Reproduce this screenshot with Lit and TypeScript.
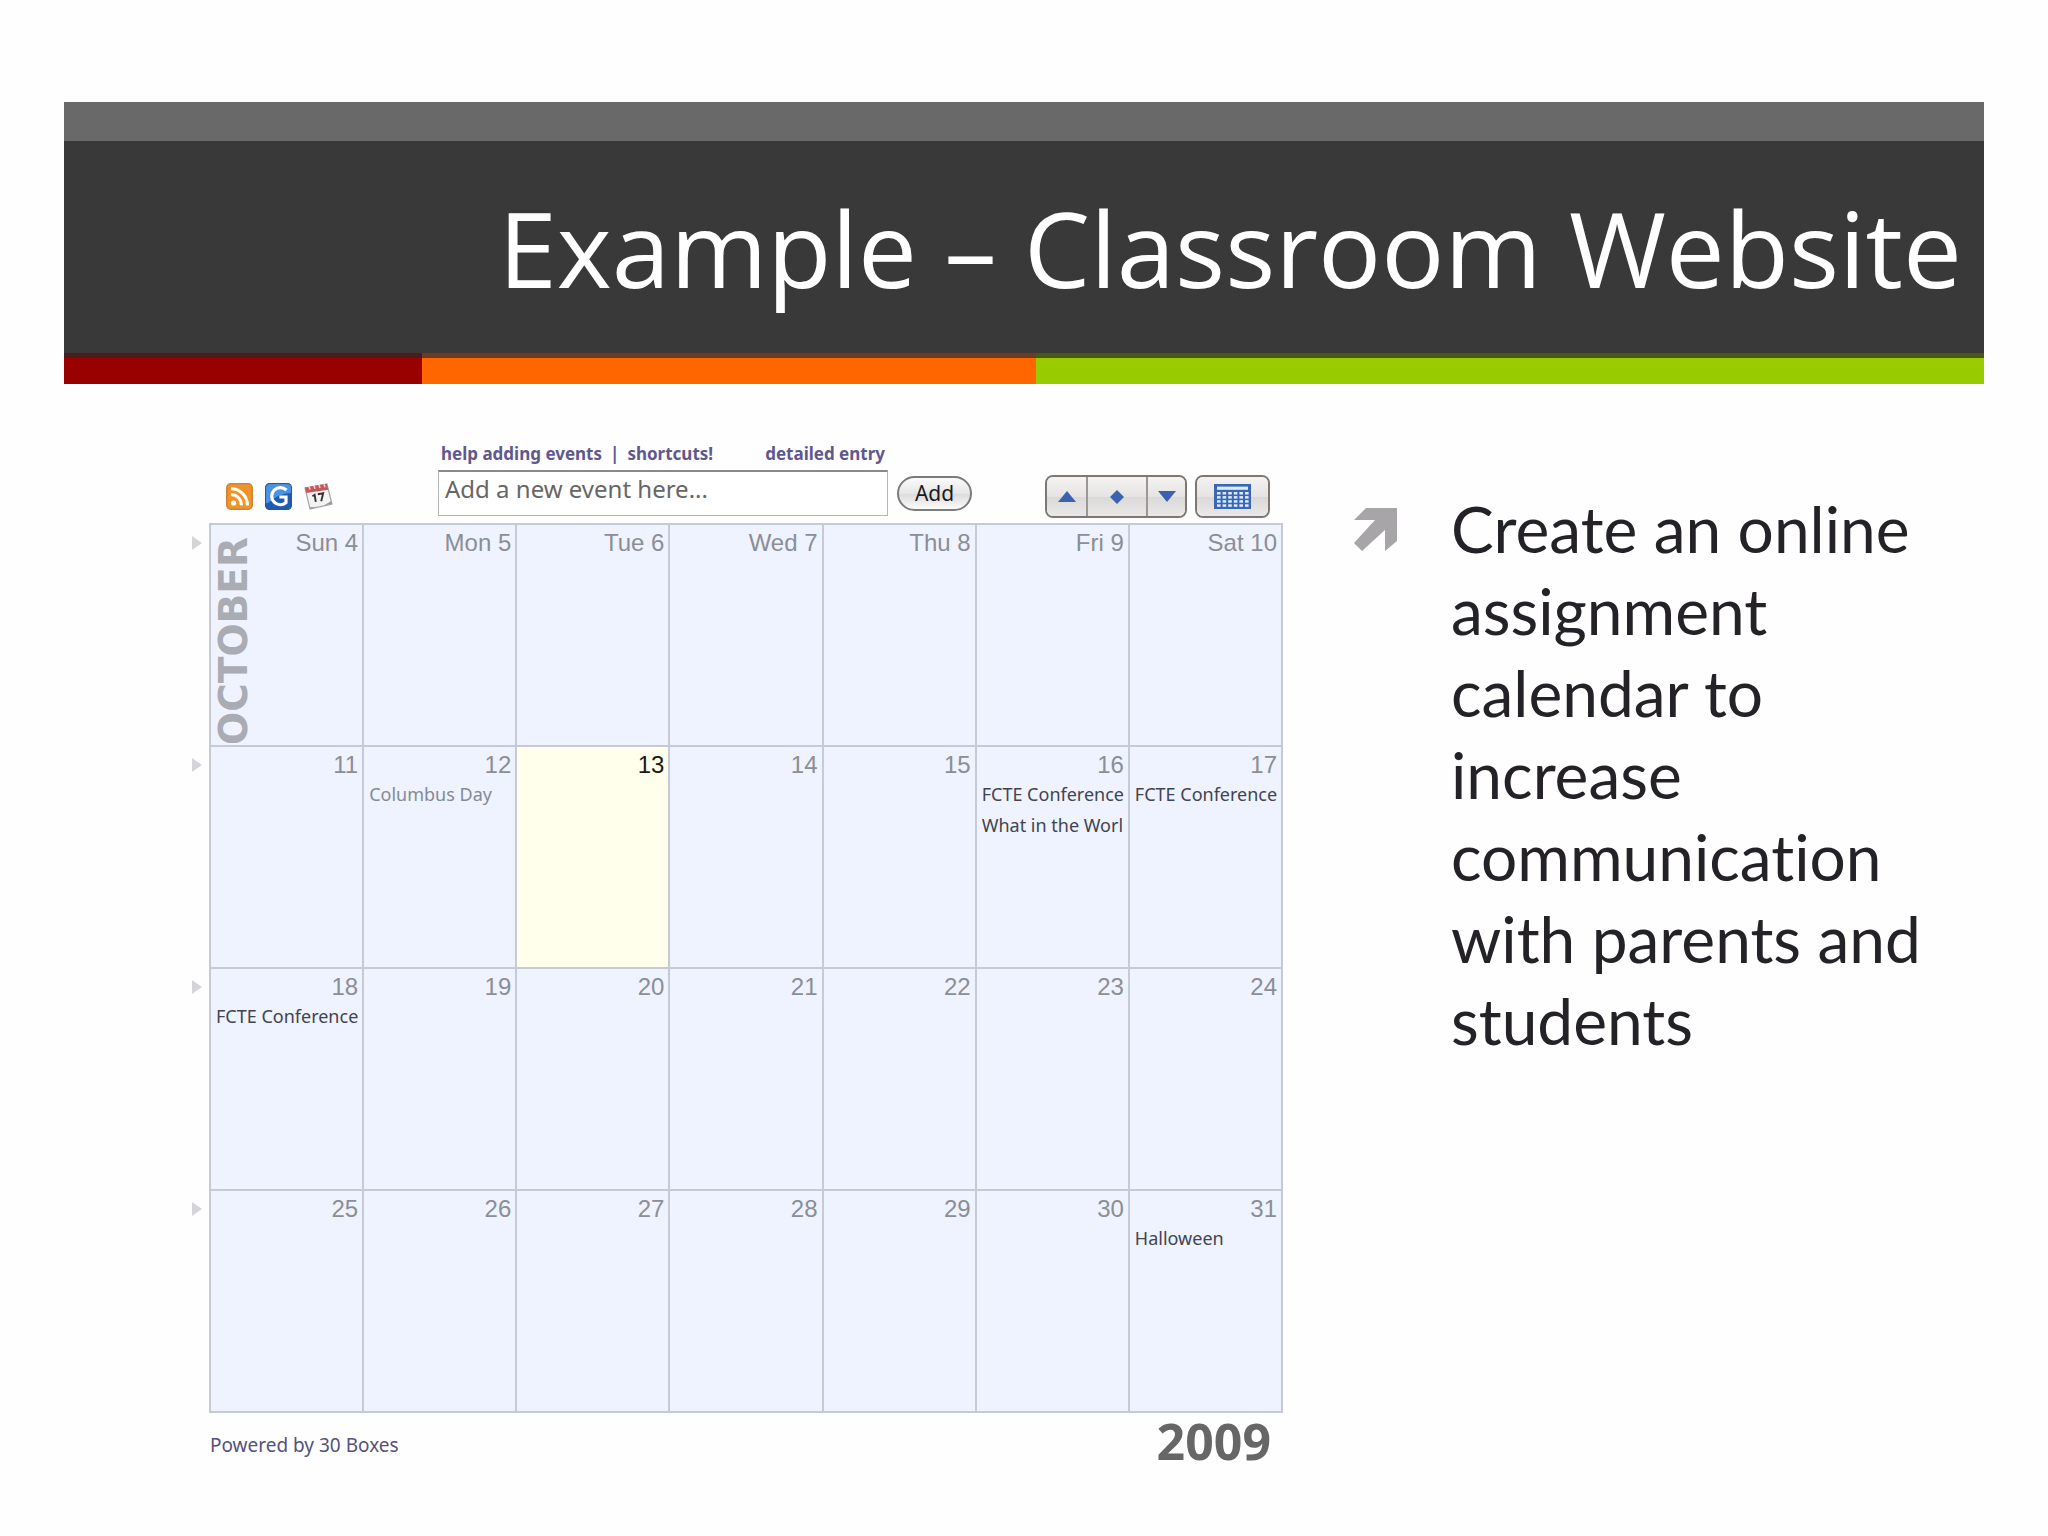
import { LitElement, html, css, svg, nothing } from "lit";
import { customElement } from "lit/decorators.js";
import { classMap } from "lit/directives/class-map.js";

interface Day {
  label: string;
  events?: string[];
  holiday?: boolean;
  today?: boolean;
}

const WEEKS: Day[][] = [
  ["Sun 4", "Mon 5", "Tue 6", "Wed 7", "Thu 8", "Fri 9", "Sat 10"].map((label) => ({ label })),
  [
    { label: "11" },
    { label: "12", events: ["Columbus Day"], holiday: true },
    { label: "13", today: true },
    { label: "14" },
    { label: "15" },
    { label: "16", events: ["FCTE Conference", "What in the Worl"] },
    { label: "17", events: ["FCTE Conference"] },
  ],
  [
    { label: "18", events: ["FCTE Conference"] },
    ...["19", "20", "21", "22", "23", "24"].map((label) => ({ label })),
  ],
  [
    ...["25", "26", "27", "28", "29", "30"].map((label) => ({ label })),
    { label: "31", events: ["Halloween"] },
  ],
];

@customElement("slide-header")
export class SlideHeader extends LitElement {
  static styles = css`
    :host { display: block; }
    .cap { height: 39px; background: #696969; }
    .title {
      margin: 0;
      height: 212px;
      display: flex;
      align-items: center;
      justify-content: flex-end;
      box-sizing: border-box;
      padding: 2px 22px 0 0;
      background: #393939;
      color: #fff;
      font: 400 105px/136px "Open Sans", "Noto Sans", sans-serif;
      white-space: nowrap;
    }
    .stripes { display: grid; grid-template-columns: 358fr 614fr 948fr; }
    .stripe { height: 26px; border-top: 5px solid; }
    .red { background: #990000; border-color: #4a1c1c; }
    .orange { background: #ff6600; border-color: #6e3a20; }
    .green { background: #99cc00; border-color: #4c5715; }
  `;
  render() {
    return html`
      <div class="cap"></div>
      <h1 class="title">Example – Classroom Website</h1>
      <div class="stripes">
        <div class="stripe red"></div>
        <div class="stripe orange"></div>
        <div class="stripe green"></div>
      </div>
    `;
  }
}

@customElement("calendar-toolbar")
export class CalendarToolbar extends LitElement {
  static styles = css`
    :host {
      display: flex;
      align-items: flex-end;
      padding: 0 13px 5px 38px;
      font-family: "Noto Sans", sans-serif;
    }
    .feeds { display: flex; gap: 12px; padding-bottom: 8px; }
    .feed { display: block; }
    .icon { display: block; }
    .entry {
      display: grid;
      grid-template-columns: 450px auto;
      column-gap: 9px;
      align-items: center;
      margin: 0 auto 2px 105px;
    }
    .links {
      grid-column: 1;
      display: flex;
      gap: 8px;
      padding: 0 3px 4px;
      font: 700 17px/24px "Noto Sans", sans-serif;
      color: #5f588f;
    }
    .links a { color: inherit; text-decoration: none; }
    .detail { margin-left: auto; }
    .box {
      grid-column: 1;
      box-sizing: border-box;
      width: 100%;
      height: 46px;
      padding: 0 6px 10px;
      border: 1px solid #b5b5b5;
      border-top: 2px solid #8a8a8a;
      background: #fff;
      color: #666;
      font: 400 24px/32px "Noto Sans", sans-serif;
    }
    .box::placeholder { color: #666; opacity: 1; }
    .add {
      width: 75px;
      height: 35px;
      padding: 0;
      border: 2px solid #7b7b7b;
      border-radius: 18px;
      background: linear-gradient(#fbfbfb, #e6e6e6 50%, #dcdcdc 52%, #fbfbfb);
      color: #1a1a1a;
      font: 400 21px/24px "Noto Sans", sans-serif;
    }
    .nav { display: flex; gap: 8px; }
    .group {
      display: flex;
      overflow: hidden;
      border: 2px solid #7c7876;
      border-radius: 8px;
    }
    .key {
      display: grid;
      place-items: center;
      width: 39px;
      height: 39px;
      padding: 0;
      border: 0;
      background: linear-gradient(#f4f3f2, #e6e4e3 50%, #dbd9d8 52%, #ebe9e8);
    }
    .key + .key { border-left: 2px solid #9a9796; }
    .key.mid { width: 60px; }
    .key.wide { width: 71px; }
  `;
  render() {
    const cells = [];
    for (let r = 0; r < 4; r++)
      for (let c = 0; c < 6; c++)
        cells.push(svg`<rect x=${3 + c * 5.6} y=${8 + r * 4.1} width="3.6" height="2.5" fill="#dcecff"></rect>`);
    return html`
      <div class="feeds">
        <a class="feed" href="#rss" aria-label="RSS feed">
          <svg class="icon" width="27" height="27" viewBox="0 0 27 27">
            <rect x="0.8" y="0.8" width="25.4" height="25.4" rx="4" fill="#f0942a" stroke="#cf8438" stroke-width="1.6"/>
            <circle cx="7.6" cy="20" r="2.6" fill="#fff"/>
            <path d="M5 11.6a10.4 10.4 0 0 1 10.4 10.8M5 5.8a16.4 16.4 0 0 1 16.4 16.6" fill="none" stroke="#fff" stroke-width="3"/>
          </svg>
        </a>
        <a class="feed" href="#google" aria-label="Google calendar">
          <svg class="icon" width="27" height="27" viewBox="0 0 27 27">
            <rect x="0.6" y="0.6" width="25.8" height="25.8" rx="4" fill="#1d5cb0" stroke="#2b5596" stroke-width="1.2"/>
            <path d="M1 5a4 4 0 0 1 4-4h17a4 4 0 0 1 4 4v5Q14 10 3 20H1z" fill="#4a93e0"/>
            <path d="M21.5 7.2A8.6 8.6 0 1 0 21 19.6V14h-6.6" fill="none" stroke="#fff" stroke-width="3.2"/>
          </svg>
        </a>
        <a class="feed" href="#ical" aria-label="iCal">
          <svg class="icon" width="29" height="27" viewBox="0 0 29 27">
            <path d="M1 5l22-4 5 20-22 5z" fill="#f4f3f4" stroke="#aaa3a6" stroke-width="1.2"/>
            <path d="M1 4.6L22.6.8l1.8 6L2.2 10z" fill="#c9575a"/>
            <path d="M5 3.6l1 3M10 2.8l1 3M15 2l1 3M20 1.2l1 3" stroke="#f3d4d4" stroke-width="1.6"/>
            <path d="M6.4 25.6L28 20.8l-1-2.6-9 5.4-12.4.6z" fill="#98979b"/>
            <path d="M8.4 13.2l2.2-1.4 1.2 7M13.8 11.2l5.4-1-2 8" fill="none" stroke="#333" stroke-width="1.9"/>
          </svg>
        </a>
      </div>
      <form class="entry" @submit=${(e: Event) => e.preventDefault()}>
        <div class="links">
          <a href="#help">help adding events</a><span>|</span><a href="#shortcuts">shortcuts!</a>
          <a class="detail" href="#detail">detailed entry</a>
        </div>
        <input class="box" type="text" aria-label="New event" placeholder="Add a new event here..." />
        <button class="add" type="submit">Add</button>
      </form>
      <div class="nav">
        <div class="group">
          <button class="key" aria-label="Earlier">
            <svg width="18" height="11" viewBox="0 0 18 11"><path d="M9 0l9 11H0z" fill="#3a62b0"/></svg>
          </button>
          <button class="key mid" aria-label="Today">
            <svg width="14" height="14" viewBox="0 0 14 14"><path d="M7 0l7 7-7 7-7-7z" fill="#3a62b0"/></svg>
          </button>
          <button class="key" aria-label="Later">
            <svg width="18" height="11" viewBox="0 0 18 11"><path d="M9 11l9-11H0z" fill="#3a62b0"/></svg>
          </button>
        </div>
        <div class="group">
          <button class="key wide" aria-label="Month view">
            <svg width="37" height="25" viewBox="0 0 37 25">
              <rect width="37" height="25" fill="#3a66b4"/>
              <rect x="3" y="2.6" width="31" height="3.2" fill="#dcecff"/>
              ${cells}
            </svg>
          </button>
        </div>
      </div>
    `;
  }
}

@customElement("month-calendar")
export class MonthCalendar extends LitElement {
  static styles = css`
    :host { display: block; }
    .grid { width: 100%; table-layout: fixed; border-collapse: collapse; }
    .edge { width: 22px; }
    .jump { padding: 12px 0 0 3px; vertical-align: top; text-align: left; }
    .jump a { display: block; }
    .jump svg { display: block; }
    .day {
      height: 220px;
      padding: 0;
      vertical-align: top;
      border: 2px solid #c6cad6;
      background: #eef3ff;
    }
    .day.today { background: #ffffec; }
    .cell { display: flex; justify-content: space-between; height: 220px; overflow: hidden; }
    .month {
      writing-mode: vertical-rl;
      transform: rotate(180deg);
      margin: 0;
      font: 700 39px/46px "DejaVu Sans", sans-serif;
      color: #a9acb2;
      white-space: nowrap;
    }
    .body { flex: 1; min-width: 0; }
    .date {
      padding: 4px 4px 0 0;
      text-align: right;
      font: 400 24px/28px "Liberation Sans", Arial, sans-serif;
      color: #8b8e95;
    }
    .today .date { color: #1c1c14; }
    .events { margin: 0; padding: 0 0 0 5px; list-style: none; }
    .event {
      overflow: hidden;
      white-space: nowrap;
      font: 400 18px/31px "Noto Sans", sans-serif;
      color: #41444f;
    }
    .holiday .event { color: #858a95; }
    .foot {
      display: flex;
      justify-content: space-between;
      align-items: center;
      padding: 0 12px 0 22px;
    }
    .credit { font: 400 19px/28px "Noto Sans", sans-serif; color: #55527a; text-decoration: none; padding-top: 8px; }
    .year { font: 700 50px/56px "Noto Sans", sans-serif; color: #666; }
  `;
  render() {
    return html`
      <calendar-toolbar></calendar-toolbar>
      <table class="grid" aria-label="October 2009">
        <colgroup><col class="edge" /><col span="7" /></colgroup>
        <tbody>
          ${WEEKS.map(
            (week, w) => html`<tr>
              <th class="jump" scope="row">
                <a href="#week" aria-label="Open week">
                  <svg width="12" height="14" viewBox="0 0 12 14"><path d="M1 0l10 7-10 7z" fill="#d6d3d9"/></svg>
                </a>
              </th>
              ${week.map(
                (day, d) => html`<td class=${classMap({ day: true, today: !!day.today, holiday: !!day.holiday })}>
                  <div class="cell">
                    ${w === 0 && d === 0 ? html`<h2 class="month">OCTOBER</h2>` : nothing}
                    <div class="body">
                      <div class="date">${day.label}</div>
                      ${day.events
                        ? html`<ul class="events">
                            ${day.events.map((e) => html`<li class="event">${e}</li>`)}
                          </ul>`
                        : nothing}
                    </div>
                  </div>
                </td>`
              )}
            </tr>`
          )}
        </tbody>
      </table>
      <div class="foot">
        <a class="credit" href="#boxes">Powered by 30 Boxes</a>
        <span class="year">2009</span>
      </div>
    `;
  }
}

@customElement("app-root")
export class AppRoot extends LitElement {
  static styles = css`
    :host { display: block; min-height: 100vh; box-sizing: border-box; padding: 102px 64px 40px; background: #fefefe; }
    .content {
      display: grid;
      grid-template-columns: 1095fr 633fr;
      column-gap: 68px;
      padding: 58px 0 0 124px;
    }
    .points { margin: 0; padding: 46px 40px 0 3px; list-style: none; }
    .point {
      display: flex;
      align-items: flex-start;
      gap: 54px;
      font: 400 64px/82px Lato, "Open Sans", sans-serif;
      font-variant-ligatures: none;
      color: #242226;
    }
    .arrow { flex: none; padding-top: 20px; }
  `;
  render() {
    return html`
      <slide-header></slide-header>
      <main class="content">
        <month-calendar></month-calendar>
        <ul class="points">
          <li class="point">
            <svg class="arrow" width="43" height="43" viewBox="0 0 43 43">
              <path d="M12 0H43V33L31 43V22L8 43 0 35 21 12H0z" fill="#a7a5a8"/>
            </svg>
            <span>Create an online assignment calendar to increase communication with parents and students</span>
          </li>
        </ul>
      </main>
    `;
  }
}
